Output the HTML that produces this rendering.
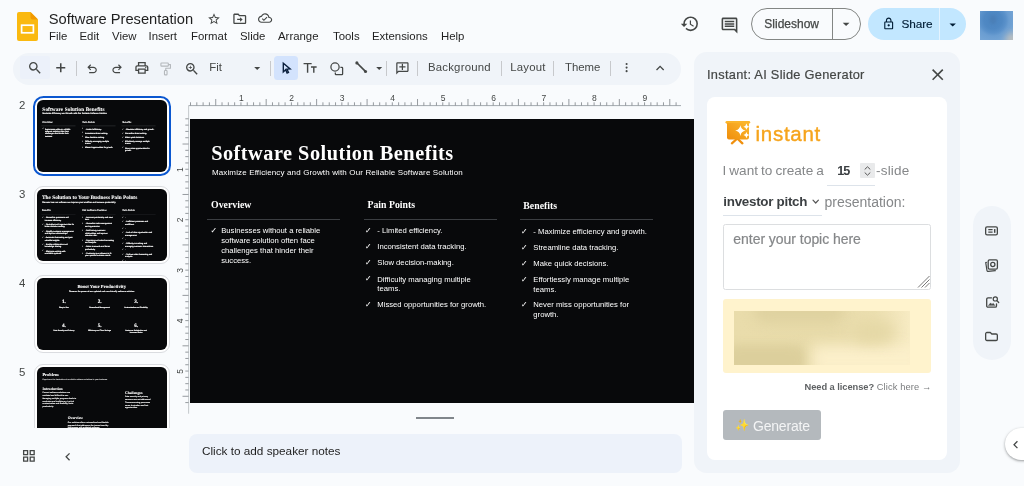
<!DOCTYPE html>
<html lang="en">
<head>
<meta charset="utf-8">
<title>Software Presentation - Google Slides</title>
<style>
*{box-sizing:border-box;margin:0;padding:0}
html,body{width:1024px;height:486px;overflow:hidden;background:#f9fbfd;font-family:"Liberation Sans",sans-serif;color:#1f1f1f}
.abs{position:absolute}
#app{position:relative;width:1024px;height:486px;overflow:hidden;background:#f9fbfd;will-change:transform;opacity:.999}
svg{display:block;overflow:visible}
/* header */
#doctitle{left:48.7px;top:9.7px;font-size:14.7px;line-height:18px;color:#1f1f1f;white-space:nowrap}
#menus{left:49px;top:29px;font-size:11.4px;line-height:14px;color:#1f1f1f;white-space:nowrap}
#menus span{position:absolute;top:0}
/* toolbar */
#toolbar{left:13px;top:52.5px;width:668px;height:32.2px;border-radius:16px;background:#f0f4f9}
.tsep{top:60.5px;width:1px;height:15.5px;background:#c7c9cc}
.tlbl{top:60.2px;font-size:11.4px;line-height:14px;color:#444746;white-space:nowrap}
/* filmstrip */
.num{font-size:11.4px;color:#444746;left:19px;line-height:12px}
.thumb{left:37px;width:129.5px;height:72.5px;background:#08090b;border-radius:6px;overflow:hidden}
.thumbring{left:34px;width:135.5px;height:78.5px;border:1px solid #dadce0;border-radius:9px;background:#fff}
.t{position:absolute;color:#fff;white-space:nowrap}
.serif{font-family:"Liberation Serif",serif;font-weight:bold}

.ck{font-family:"DejaVu Sans",sans-serif;font-size:7.8px;line-height:9.8px;margin-top:-.3px}
.bl{font-size:7.7px;line-height:9.8px;}
.bl5{font-size:7.4px;line-height:10.6px;font-weight:bold}
.hd{font-size:9.8px;line-height:12px}
.dv{width:133px;height:1px;background:#3b3e42}
.ctr{text-align:center}
.sc{position:absolute;left:0;top:0;width:504.5px;height:283.5px;transform:scale(.2567);transform-origin:0 0}
.pt{font-size:13.500px;line-height:16px;color:#858789;white-space:nowrap}
.thumb .t{text-rendering:geometricPrecision}
.thumb .bl,.thumb .sub{-webkit-text-stroke:.6px #fff}
.thumb .bl5{-webkit-text-stroke:.3px #fff}
.thumb .serif{-webkit-text-stroke:.3px #fff}
.thumb .ck{-webkit-text-stroke:.4px #fff}
.thumb .dv{background:#3b3e42;height:1.4px}
</style>
</head>
<body>
<div id="app">

<!-- ===== header ===== -->
<div class="abs" id="logo" style="left:17px;top:12px;width:21px;height:29px">
<svg width="21" height="29" viewBox="0 0 21 29"><path d="M2 0h11.5L21 7.5V27a2 2 0 0 1-2 2H2a2 2 0 0 1-2-2V2a2 2 0 0 1 2-2z" fill="#fbb910"/><path d="M13.5 0L21 7.5h-5.5a2 2 0 0 1-2-2z" fill="#f29900"/><rect x="4.6" y="13.2" width="11.8" height="7.6" fill="none" stroke="#fff" stroke-width="1.7"/></svg>
</div>
<div class="abs" id="doctitle">Software Presentation</div>
<div class="abs" id="menus">
<span style="left:0">File</span><span style="left:30.5px">Edit</span><span style="left:63px">View</span><span style="left:99.5px">Insert</span><span style="left:142px">Format</span><span style="left:191px">Slide</span><span style="left:229px">Arrange</span><span style="left:284px">Tools</span><span style="left:323px">Extensions</span><span style="left:392px">Help</span>
</div>

<svg class="abs" style="left:206.80px;top:11.90px" width="14" height="14" viewBox="0 0 24 24" fill="#444746" ><path d="M22 9.240l-7.190-.620L12 2 9.190 8.630 2 9.240l5.460 4.730L5.820 21 12 17.270 18.180 21l-1.630-7.030L22 9.240zM12 15.400l-3.760 2.270 1-4.280-3.320-2.880 4.380-.380L12 6.100l1.710 4.040 4.380.380-3.320 2.880 1 4.280L12 15.400z"/></svg>
<svg class="abs" style="left:231.70px;top:10.95px" width="15.5" height="15.5" viewBox="0 0 24 24" fill="#444746" ><path d="M20 6h-8l-2-2H4c-1.100 0-2 .900-2 2v12c0 1.100.900 2 2 2h16c1.100 0 2-.900 2-2V8c0-1.100-.900-2-2-2zm0 12H4V6h5.170l2 2H20v10zm-7.500-1.500l4-3.500-4-3.500V12H8v2h4.500v2.500z"/></svg>
<svg class="abs" style="left:257.90px;top:11.40px" width="14.2" height="14.2" viewBox="0 0 24 24" fill="#444746" ><path d="M19.350 10.040C18.670 6.590 15.640 4 12 4 9.110 4 6.600 5.640 5.350 8.040 2.340 8.360 0 10.910 0 14c0 3.310 2.690 6 6 6h13c2.760 0 5-2.240 5-5 0-2.640-2.050-4.780-4.650-4.960zM19 18H6c-2.210 0-4-1.790-4-4 0-2.050 1.530-3.760 3.560-3.970l1.070-.110.500-.950C8.080 7.140 9.940 6 12 6c2.620 0 4.880 1.860 5.390 4.430l.300 1.500 1.530.110c1.560.100 2.780 1.410 2.780 2.960 0 1.650-1.350 3-3 3zm-9-3.820l-2.090-2.090L6.500 13.500 10 17l6.010-6.010-1.410-1.410z"/></svg>
<svg class="abs" style="left:679.70px;top:14.20px" width="19.6" height="19.6" viewBox="0 0 24 24" fill="#444746" ><path d="M13 3a9 9 0 0 0-9 9H1l3.890 3.890.070.140L9 12H6c0-3.870 3.130-7 7-7s7 3.130 7 7-3.130 7-7 7c-1.930 0-3.680-.790-4.940-2.060l-1.420 1.420A8.954 8.954 0 0 0 13 21a9 9 0 0 0 0-18zm-1 5v5l4.250 2.520.770-1.280-3.520-2.090V8H12z"/></svg>
<svg class="abs" style="left:719.55px;top:15.80px" width="19" height="19" viewBox="0 0 24 24" fill="#444746" ><path d="M21.990 4c0-1.100-.890-2-1.990-2H4c-1.100 0-2 .900-2 2v12c0 1.100.900 2 2 2h14l4 4-.010-18zM20 4v13.170L18.830 16H4V4h16zM6 12h12v2H6zm0-3h12v2H6zm0-3h12v2H6z"/></svg>
<div class="abs" style="left:750.8px;top:8.2px;width:110.3px;height:31.7px;border:1px solid #838684;border-radius:16px"></div>
<div class="abs" style="left:831.8px;top:8.7px;width:1px;height:30.7px;background:#838684"></div>
<div class="abs" style="left:764.3px;top:16.7px;font-size:12px;line-height:14px;color:#444746;white-space:nowrap;-webkit-text-stroke:.25px #444746">Slideshow</div>
<svg class="abs" style="left:837.80px;top:15.80px" width="16.2" height="16.2" viewBox="0 0 24 24" fill="#444746" ><path d="M7 10l5 5 5-5z"/></svg>
<div class="abs" style="left:867.5px;top:8.2px;width:98.8px;height:31.7px;border-radius:16px;background:#c2e7ff"></div>
<div class="abs" style="left:938.8px;top:8.2px;width:1px;height:31.7px;background:#e4f3ff"></div>
<svg class="abs" style="left:881.55px;top:16.70px" width="13.4" height="13.4" viewBox="0 0 24 24" fill="#001d35" ><path d="M18 8h-1V6c0-2.760-2.240-5-5-5S7 3.240 7 6v2H6c-1.100 0-2 .900-2 2v10c0 1.100.900 2 2 2h12c1.100 0 2-.900 2-2V10c0-1.100-.900-2-2-2zM9 6c0-1.660 1.340-3 3-3s3 1.340 3 3v2H9V6zm9 14H6V10h12v10zm-6-3c1.100 0 2-.900 2-2s-.900-2-2-2-2 .900-2 2 .900 2 2 2z"/></svg>
<div class="abs" style="left:901.6px;top:16.7px;font-size:11.8px;line-height:14px;color:#001d35;white-space:nowrap;letter-spacing:-.1px;-webkit-text-stroke:.15px #001d35">Share</div>
<svg class="abs" style="left:945.10px;top:16.90px" width="15.4" height="15.4" viewBox="0 0 24 24" fill="#001d35" ><path d="M7 10l5 5 5-5z"/></svg>
<div class="abs" id="avatar" style="left:980.2px;top:10.6px;width:32.8px;height:29.1px;background:radial-gradient(circle at 13px 9px,#4b84c0 0,#4f88c3 9px,#5a91ca 13px,#6a9dd1 16px,#74a4d5 22px);overflow:hidden"><div class="abs" style="left:10px;top:4px;width:6px;height:9px;border-radius:50%;background:#4a7db4;filter:blur(1.500px);opacity:.8"></div><div class="abs" style="right:-9px;bottom:-9px;width:17px;height:17px;border-radius:50%;background:#c2c2be;filter:blur(3px);opacity:.9"></div></div>

<!-- ===== toolbar ===== -->
<div class="abs" id="toolbar"></div>
<div class="abs" style="left:20.2px;top:56.2px;width:29.6px;height:22.4px;border-radius:2px;background:#ecf1fa"></div>
<div class="abs" style="left:274px;top:56px;width:23.5px;height:23.500px;border-radius:3.500px;background:#d3e3fd"></div>
<div class="abs tsep" style="left:76.00px"></div>
<div class="abs tsep" style="left:269.90px"></div>
<div class="abs tsep" style="left:386.10px"></div>
<div class="abs tsep" style="left:416.75px"></div>
<div class="abs tsep" style="left:501.10px"></div>
<div class="abs tsep" style="left:553.10px"></div>
<div class="abs tsep" style="left:610.00px"></div>
<svg class="abs" style="left:26.70px;top:60.30px" width="16" height="16" viewBox="0 0 24 24" fill="#444746" ><path d="M15.5 14h-.79l-.28-.27A6.471 6.471 0 0 0 16 9.5 6.5 6.5 0 1 0 9.5 16c1.61 0 3.09-.59 4.23-1.57l.27.28v.79l5 4.99L20.49 19l-4.99-5zm-6 0C7.01 14 5 11.99 5 9.5S7.01 5 9.5 5 14 7.01 14 9.5 11.99 14 9.5 14z"/></svg>
<svg class="abs" style="left:52.70px;top:59.75px" width="15.5" height="15.5" viewBox="0 0 24 24" fill="#444746" ><path d="M19 13.200h-5.800V19h-2.400v-5.800H5v-2.400h5.800V5h2.400v5.800H19z"/></svg>
<svg class="abs" style="left:84.70px;top:61.95px" width="14.2" height="14.2" viewBox="0 0 24 24" fill="#444746" ><path d="M7 19v-2h7.1q1.575 0 2.738-1T18 13.500 16.838 11 14.100 10H7.800l2.600 2.600L9 14 4 9l5-5 1.400 1.400L7.800 8h6.300q2.425 0 4.163 1.575T20 13.500t-1.737 3.925T14.100 19z"/></svg>
<svg class="abs" style="left:109.60px;top:61.95px" width="14.2" height="14.2" viewBox="0 0 24 24" fill="#444746" ><path d="M9.900 19q-2.425 0-4.163-1.575T4 13.500t1.737-3.925T9.900 8h6.300l-2.600-2.600L15 4l5 5-5 5-1.400-1.400 2.600-2.600H9.900q-1.575 0-2.738 1T6 13.500 7.162 16t2.738 1H17v2z"/></svg>
<svg class="abs" style="left:134.15px;top:60.25px" width="15.7" height="15.7" viewBox="0 0 24 24" fill="#444746" ><path d="M19 8h-1V3H6v5H5c-1.660 0-3 1.340-3 3v6h4v4h12v-4h4v-6c0-1.660-1.340-3-3-3zM8 5h8v3H8V5zm8 12v2H8v-4h8v2zm2-2v-2H6v2H4v-4c0-.550.450-1 1-1h14c.550 0 1 .450 1 1v4h-2z"/><circle cx="18" cy="11.500" r="1"/></svg>
<svg class="abs" style="left:158.45px;top:60.85px" width="15.5" height="15.5" viewBox="0 0 24 24" fill="none" stroke="#b4b8bc" stroke-width="1.700" stroke-linejoin="round"><rect x="4.500" y="3.200" width="11.500" height="4.800" rx="1"/><path d="M16 5.600H19.300V11.200H12V14.500"/><rect x="10" y="14.700" width="4" height="6.800" rx="1"/></svg>
<svg class="abs" style="left:184.00px;top:60.70px" width="16" height="16" viewBox="0 0 24 24" fill="#444746" ><path d="M15.500 14h-.790l-.280-.270A6.471 6.471 0 0 0 16 9.500 6.500 6.500 0 1 0 9.500 16c1.610 0 3.090-.590 4.230-1.570l.270.280v.790l5 4.990L20.490 19l-4.990-5zm-6 0C7.010 14 5 11.990 5 9.500S7.010 5 9.500 5 14 7.010 14 9.500 11.990 14 9.500 14zm.5-7H9v2H7v1h2v2h1v-2h2V9h-2z"/></svg>
<div class="abs tlbl" style="left:209.3px">Fit</div>
<svg class="abs" style="left:250.30px;top:61.10px" width="14.4" height="14.4" viewBox="0 0 24 24" fill="#444746" ><path d="M7 10l5 5 5-5z"/></svg>
<svg class="abs" style="left:280.20px;top:62.20px" width="12.2" height="12.2" viewBox="0 0 24 24" fill="#444746" ><path d="M6.500 2.500v17l4.600-4.300 2.900 6.600 2.700-1.200-2.900-6.500 6.200-.300z" fill="none" stroke="#0a1f3d" stroke-width="2.700" stroke-linejoin="miter"/></svg>
<svg class="abs" style="left:302.10px;top:59.70px" width="16.2" height="16.2" viewBox="0 0 24 24" fill="#444746" ><path d="M2.300 5.400H14.300M8.300 5.400V19M13.300 10.300H21.700M17.500 10.300V19" fill="none" stroke="#444746" stroke-width="2.100"/></svg>
<svg class="abs" style="left:328.70px;top:60.60px" width="15.2" height="15.2" viewBox="0 0 24 24" fill="#444746" ><circle cx="9.500" cy="9.500" r="6.500" fill="none" stroke="#444746" stroke-width="2"/><path d="M18 10h2.500a1 1 0 0 1 1 1v9.500a1 1 0 0 1-1 1H11a1 1 0 0 1-1-1V18" fill="none" stroke="#444746" stroke-width="2"/></svg>
<svg class="abs" style="left:354.40px;top:60.30px" width="14.4" height="14.4" viewBox="0 0 24 24" fill="#444746" ><path d="M5 5l14 14" stroke="#444746" stroke-width="2.900" fill="none"/><circle cx="4.800" cy="4.800" r="2.600"/><circle cx="19.200" cy="19.200" r="2.600"/></svg>
<svg class="abs" style="left:371.90px;top:61.10px" width="14.4" height="14.4" viewBox="0 0 24 24" fill="#444746" ><path d="M7 10l5 5 5-5z"/></svg>
<svg class="abs" style="left:394.70px;top:60.60px" width="14.8" height="14.8" viewBox="0 0 24 24" fill="#444746" ><g transform="translate(24,0) scale(-1,1)"><path d="M22 4c0-1.100-.900-2-2-2H4c-1.100 0-2 .900-2 2v12c0 1.100.900 2 2 2h14l4 4V4zm-2 13.170L18.830 16H4V4h16v13.170z"/></g><path d="M13 5h-2v4H7v2h4v4h2v-4h4V9h-4z" transform="translate(0,-0.500)"/></svg>
<div class="abs tlbl" style="left:428px;letter-spacing:.2px">Background</div>
<div class="abs tlbl" style="left:510.2px;letter-spacing:.22px">Layout</div>
<div class="abs tlbl" style="left:565px;letter-spacing:-.05px">Theme</div>
<svg class="abs" style="left:619.60px;top:61.45px" width="13.2" height="13.2" viewBox="0 0 24 24" fill="#444746" ><circle cx="12" cy="5.500" r="1.900"/><circle cx="12" cy="12" r="1.900"/><circle cx="12" cy="18.500" r="1.900"/></svg>
<svg class="abs" style="left:651.60px;top:60.20px" width="16.2" height="16.2" viewBox="0 0 24 24" fill="#444746" ><path d="M12 8l-6 6 1.410 1.410L12 10.830l4.590 4.580L18 14z"/></svg>

<!-- ===== filmstrip ===== -->
<div class="abs num" style="top:99.2px">2</div>
<div class="abs num" style="top:188.2px">3</div>
<div class="abs num" style="top:277.2px">4</div>
<div class="abs num" style="top:366.1px">5</div>

<div class="abs" style="left:32.8px;top:95.6px;width:137.8px;height:80.6px;border:2px solid #0b57d0;border-radius:10.5px;background:#fff"></div>
<div class="abs thumb" id="th2" style="top:99.8px"><div class="sc">
<div class="t serif" style="left:20.9px;top:22.7px;font-size:20.3px;line-height:24px;letter-spacing:.5px">Software Solution Benefits</div>
<div class="t sub" style="left:21.6px;top:48.9px;font-size:8px;line-height:10px;letter-spacing:.14px">Maximize Efficiency and Growth with Our Reliable Software Solution</div>
<div class="t serif hd" style="left:20.8px;top:80.6px">Overview</div>
<div class="t serif hd" style="left:177.2px;top:80.6px">Pain Points</div>
<div class="t serif hd" style="left:333px;top:81.1px">Benefits</div>
<div class="abs dv" style="left:16.5px;top:100.3px"></div>
<div class="abs dv" style="left:173.3px;top:100.3px"></div>
<div class="abs dv" style="left:329.3px;top:100.3px"></div>
<div class="t ck" style="left:20.3px;top:107.5px">✓</div><div class="t bl" style="left:30.9px;top:107.5px">Businesses without a reliable<br>software solution often face<br>challenges that hinder their<br>success.</div>
<div class="t ck" style="left:174.7px;top:107.7px">✓</div><div class="t bl" style="left:187px;top:107.7px">- Limited efficiency.</div>
<div class="t ck" style="left:174.7px;top:123.6px">✓</div><div class="t bl" style="left:187px;top:123.6px">Inconsistent data tracking.</div>
<div class="t ck" style="left:174.7px;top:139.6px">✓</div><div class="t bl" style="left:187px;top:139.6px">Slow decision-making.</div>
<div class="t ck" style="left:174.7px;top:155.8px">✓</div><div class="t bl" style="left:187px;top:155.8px">Difficulty managing multiple<br>teams.</div>
<div class="t ck" style="left:174.7px;top:181.3px">✓</div><div class="t bl" style="left:187px;top:181.3px">Missed opportunities for growth.</div>
<div class="t ck" style="left:330.7px;top:108.3px">✓</div><div class="t bl" style="left:343px;top:108.3px">- Maximize efficiency and growth.</div>
<div class="t ck" style="left:330.7px;top:124.2px">✓</div><div class="t bl" style="left:343px;top:124.2px">Streamline data tracking.</div>
<div class="t ck" style="left:330.7px;top:140.1px">✓</div><div class="t bl" style="left:343px;top:140.1px">Make quick decisions.</div>
<div class="t ck" style="left:330.7px;top:156.1px">✓</div><div class="t bl" style="left:343px;top:156.1px">Effortlessly manage multiple<br>teams.</div>
<div class="t ck" style="left:330.7px;top:181.5px">✓</div><div class="t bl" style="left:343px;top:181.5px">Never miss opportunities for<br>growth.</div>
</div></div>
<div class="abs thumbring" style="top:185.8px"></div>
<div class="abs thumb" id="th3" style="top:188.8px"><div class="sc">
<div class="t serif" style="left:19.5px;top:20.5px;font-size:20.5px;line-height:24px;letter-spacing:.1px">The Solution to Your Business Pain Points</div>
<div class="t sub" style="left:20px;top:46px;font-size:8px;line-height:10px;letter-spacing:.05px">Discover how our software can improve your workflow and increase productivity.</div>
<div class="t serif hd" style="left:19.5px;top:77px">Benefits</div>
<div class="t serif hd" style="left:175px;top:77px">Our Software Features</div>
<div class="t serif hd" style="left:333px;top:78px">Pain Points</div>
<div class="abs dv" style="left:16.5px;top:100px"></div>
<div class="abs dv" style="left:173.3px;top:100px"></div>
<div class="abs dv" style="left:329.3px;top:100px"></div>
<div class="t ck" style="left:19px;top:107px">✓</div><div class="t bl" style="left:30px;top:107px">- Streamline processes and<br>increase efficiency.</div>
<div class="t ck" style="left:19px;top:132px">✓</div><div class="t bl" style="left:30px;top:132px">- Centralize and organize data for<br>better decision-making.</div>
<div class="t ck" style="left:19px;top:160px">✓</div><div class="t bl" style="left:30px;top:160px">- Simplify customer management<br>and improve relationships.</div>
<div class="t ck" style="left:19px;top:185px">✓</div><div class="t bl" style="left:30px;top:185px">- Automate forecasting and gain<br>valuable insights.</div>
<div class="t ck" style="left:19px;top:210.5px">✓</div><div class="t bl" style="left:30px;top:210.5px">- Enable collaboration and<br>knowledge sharing.</div>
<div class="t ck" style="left:19px;top:236.5px">✓</div><div class="t bl" style="left:30px;top:236.5px">- Eliminate working with<br>unreliable systems.</div>
<div class="t ck" style="left:174.7px;top:105.5px">✓</div><div class="t bl" style="left:187px;top:105.5px">- Increase productivity and save<br>time.</div>
<div class="t ck" style="left:174.7px;top:131px">✓</div><div class="t bl" style="left:187px;top:131px">- Streamline task management<br>and organization.</div>
<div class="t ck" style="left:174.7px;top:158px">✓</div><div class="t bl" style="left:187px;top:158px">- Build strong customer<br>relationships and improve<br>retention rate.</div>
<div class="t ck" style="left:174.7px;top:194px">✓</div><div class="t bl" style="left:187px;top:194px">- Reporting and sales forecasting<br>and analysis.</div>
<div class="t ck" style="left:174.7px;top:219.5px">✓</div><div class="t bl" style="left:187px;top:219.5px">- Better teamwork and boost<br>productivity.</div>
<div class="t ck" style="left:174.7px;top:245.5px">✓</div><div class="t bl" style="left:187px;top:245.5px">- Customize our software to fit<br>your specific business needs.</div>
<div class="t ck" style="left:331px;top:105.5px">✓</div><div class="t bl" style="left:343px;top:105.5px">-</div>
<div class="t ck" style="left:331px;top:123px">✓</div><div class="t bl" style="left:343px;top:123px">- Inefficient processes and<br>workflows.</div>
<div class="t ck" style="left:331px;top:147.5px">✓</div><div class="t bl" style="left:343px;top:147.5px">-</div>
<div class="t ck" style="left:331px;top:165px">✓</div><div class="t bl" style="left:343px;top:165px">- Lack of data organization and<br>management.</div>
<div class="t ck" style="left:331px;top:189.5px">✓</div><div class="t bl" style="left:343px;top:189.5px">-</div>
<div class="t ck" style="left:331px;top:207px">✓</div><div class="t bl" style="left:343px;top:207px">- Difficulty in tracking and<br>managing customer interactions.</div>
<div class="t ck" style="left:331px;top:231.5px">✓</div><div class="t bl" style="left:343px;top:231.5px">-</div>
<div class="t ck" style="left:331px;top:249px">✓</div><div class="t bl" style="left:343px;top:249px">- Tedious sales forecasting and<br>analysis.</div>
<div class="t ck" style="left:331px;top:273.5px">✓</div><div class="t bl" style="left:343px;top:273.5px">-</div>
</div></div>
<div class="abs thumbring" style="top:274.8px"></div>
<div class="abs thumb" id="th4" style="top:277.8px"><div class="sc">
<div class="t serif ctr" style="left:0;width:504.5px;top:21px;font-size:18px;line-height:22px;letter-spacing:.2px">Boost Your Productivity</div>
<div class="t ctr" style="left:0;width:504.5px;top:46.8px;font-size:7.6px;line-height:10px;font-weight:bold;-webkit-text-stroke:.4px #fff">Discover the power of our updated and user-friendly software solution.</div>
<div class="t serif ctr" style="left:25px;width:160px;top:82px;font-size:20px;line-height:22px;-webkit-text-stroke:.5px #fff">1.</div>
<div class="t ctr" style="left:25px;width:160px;top:108.5px;font-size:6.6px;line-height:10.5px;font-weight:bold;-webkit-text-stroke:.5px #fff">Easy to Use</div>
<div class="t serif ctr" style="left:163.7px;width:160px;top:82px;font-size:20px;line-height:22px;-webkit-text-stroke:.5px #fff">2.</div>
<div class="t ctr" style="left:163.7px;width:160px;top:108.5px;font-size:6.6px;line-height:10.5px;font-weight:bold;-webkit-text-stroke:.5px #fff">Streamlined Management</div>
<div class="t serif ctr" style="left:306px;width:160px;top:82px;font-size:20px;line-height:22px;-webkit-text-stroke:.5px #fff">3.</div>
<div class="t ctr" style="left:306px;width:160px;top:108.5px;font-size:6.6px;line-height:10.5px;font-weight:bold;-webkit-text-stroke:.5px #fff">Customization and Flexibility</div>
<div class="t serif ctr" style="left:25px;width:160px;top:171.5px;font-size:20px;line-height:22px;-webkit-text-stroke:.5px #fff">4.</div>
<div class="t ctr" style="left:25px;width:160px;top:199px;font-size:6.6px;line-height:10.5px;font-weight:bold;-webkit-text-stroke:.5px #fff">Data Security and Privacy</div>
<div class="t serif ctr" style="left:163.7px;width:160px;top:171.5px;font-size:20px;line-height:22px;-webkit-text-stroke:.5px #fff">5.</div>
<div class="t ctr" style="left:163.7px;width:160px;top:199px;font-size:6.6px;line-height:10.5px;font-weight:bold;-webkit-text-stroke:.5px #fff">Efficiency and Time Savings</div>
<div class="t serif ctr" style="left:306px;width:160px;top:171.5px;font-size:20px;line-height:22px;-webkit-text-stroke:.5px #fff">6.</div>
<div class="t ctr" style="left:306px;width:160px;top:199px;font-size:6.6px;line-height:10.5px;font-weight:bold;-webkit-text-stroke:.5px #fff">Customer Satisfaction and<br>Increased Sales</div>
</div></div>
<div class="abs" style="left:0;top:360px;width:180px;height:68px;overflow:hidden">
<div class="abs thumbring" style="top:3.8px"></div>
<div class="abs thumb" id="th5" style="top:6.8px"><div class="sc">
<div class="t serif" style="left:21px;top:21px;font-size:17px;line-height:22px;letter-spacing:.2px">Problem</div>
<div class="t" style="left:21.5px;top:44.5px;font-size:7px;line-height:10px;font-weight:bold">Experience the frustration of unreliable software solutions in your business.</div>
<div class="t serif" style="left:21.3px;top:75.5px;font-size:14.5px;line-height:18px">Introduction</div>
<div class="t bl5" style="left:21.5px;top:96px">Current software solutions are<br>outdated and difficult to use.<br>Managing multiple programs leads to<br>confusion and inefficiency. Lack of<br>customization and flexibility limits<br>productivity.</div>
<div class="t serif" style="left:342.7px;top:90.5px;font-size:14.5px;line-height:18px">Challenges</div>
<div class="t bl5" style="left:343px;top:111px">Data security and privacy<br>concerns are not addressed.<br>Time-consuming processes<br>cause frustration and lost<br>opportunities.</div>
<div class="t serif" style="left:119.6px;top:191px;font-size:14.5px;line-height:18px">Overview</div>
<div class="t bl5" style="left:120px;top:210px">Our solution offers a streamlined and flexible<br>approach that addresses the issues faced by<br>businesses with outdated software.</div>
</div></div>
</div>

<!-- ===== rulers ===== -->
<svg class="abs" id="rulers" style="left:0;top:0" width="1024" height="486" viewBox="0 0 1024 486">
<g stroke="#8a8f94" stroke-width=".9" fill="none">
<path d="M188.6 105.6H681" stroke="#9aa0a6"/>
<path d="M188.6 105.6V413.7" stroke="#c0c3c6"/>
<path d="M190.50 102.3V105.6M196.81 102.3V105.6M203.11 102.3V105.6M209.42 102.3V105.6M215.72 99V105.6M222.03 102.3V105.6M228.34 102.3V105.6M234.64 102.3V105.6M240.95 102.3V105.6M247.26 102.3V105.6M253.56 102.3V105.6M259.87 102.3V105.6M266.18 99V105.6M272.48 102.3V105.6M278.79 102.3V105.6M285.09 102.3V105.6M291.40 102.3V105.6M297.71 102.3V105.6M304.01 102.3V105.6M310.32 102.3V105.6M316.62 99V105.6M322.93 102.3V105.6M329.24 102.3V105.6M335.54 102.3V105.6M341.85 102.3V105.6M348.16 102.3V105.6M354.46 102.3V105.6M360.77 102.3V105.6M367.08 99V105.6M373.38 102.3V105.6M379.69 102.3V105.6M385.99 102.3V105.6M392.30 102.3V105.6M398.61 102.3V105.6M404.91 102.3V105.6M411.22 102.3V105.6M417.52 99V105.6M423.83 102.3V105.6M430.14 102.3V105.6M436.44 102.3V105.6M442.75 102.3V105.6M449.06 102.3V105.6M455.36 102.3V105.6M461.67 102.3V105.6M467.98 99V105.6M474.28 102.3V105.6M480.59 102.3V105.6M486.89 102.3V105.6M493.20 102.3V105.6M499.51 102.3V105.6M505.81 102.3V105.6M512.12 102.3V105.6M518.42 99V105.6M524.73 102.3V105.6M531.04 102.3V105.6M537.34 102.3V105.6M543.65 102.3V105.6M549.96 102.3V105.6M556.26 102.3V105.6M562.57 102.3V105.6M568.88 99V105.6M575.18 102.3V105.6M581.49 102.3V105.6M587.79 102.3V105.6M594.10 102.3V105.6M600.41 102.3V105.6M606.71 102.3V105.6M613.02 102.3V105.6M619.33 99V105.6M625.63 102.3V105.6M631.94 102.3V105.6M638.24 102.3V105.6M644.55 102.3V105.6M650.86 102.3V105.6M657.16 102.3V105.6M663.47 102.3V105.6M669.78 99V105.6M676.08 102.3V105.6"/>
<path d="M185.3 118.80H188.6M185.3 125.11H188.6M185.3 131.41H188.6M185.3 137.72H188.6M182.5 144.03H188.6M185.3 150.33H188.6M185.3 156.64H188.6M185.3 162.94H188.6M185.3 169.25H188.6M185.3 175.56H188.6M185.3 181.86H188.6M185.3 188.17H188.6M182.5 194.48H188.6M185.3 200.78H188.6M185.3 207.09H188.6M185.3 213.39H188.6M185.3 219.70H188.6M185.3 226.01H188.6M185.3 232.31H188.6M185.3 238.62H188.6M182.5 244.93H188.6M185.3 251.23H188.6M185.3 257.54H188.6M185.3 263.84H188.6M185.3 270.15H188.6M185.3 276.46H188.6M185.3 282.76H188.6M185.3 289.07H188.6M182.5 295.38H188.6M185.3 301.68H188.6M185.3 307.99H188.6M185.3 314.29H188.6M185.3 320.60H188.6M185.3 326.91H188.6M185.3 333.21H188.6M185.3 339.52H188.6M182.5 345.82H188.6M185.3 352.13H188.6M185.3 358.44H188.6M185.3 364.74H188.6M185.3 371.05H188.6M185.3 377.36H188.6M185.3 383.66H188.6M185.3 389.97H188.6M182.5 396.28H188.6M185.3 402.58H188.6"/>
</g>
<g font-family="Liberation Sans, sans-serif" font-size="8.500" fill="#444746" text-anchor="middle">
<text x="241.25" y="100.6">1</text><text x="291.70" y="100.6">2</text><text x="342.15" y="100.6">3</text><text x="392.60" y="100.6">4</text><text x="443.05" y="100.6">5</text><text x="493.50" y="100.6">6</text><text x="543.95" y="100.6">7</text><text x="594.40" y="100.6">8</text><text x="644.85" y="100.6">9</text>
<text transform="translate(183.1 169.55) rotate(-90)">1</text><text transform="translate(183.1 220.00) rotate(-90)">2</text><text transform="translate(183.1 270.45) rotate(-90)">3</text><text transform="translate(183.1 320.90) rotate(-90)">4</text><text transform="translate(183.1 371.35) rotate(-90)">5</text>
</g></svg>
<!-- ===== main slide ===== -->
<div class="abs" id="slide" style="left:190.3px;top:118.8px;width:504px;height:283.8px;background:#08090b;overflow:hidden">
<div class="t serif" style="left:20.9px;top:22.7px;font-size:20.3px;line-height:24px;letter-spacing:.5px">Software Solution Benefits</div>
<div class="t sub" style="left:21.6px;top:48.9px;font-size:8px;line-height:10px;letter-spacing:.14px">Maximize Efficiency and Growth with Our Reliable Software Solution</div>
<div class="t serif hd" style="left:20.8px;top:80.6px">Overview</div>
<div class="t serif hd" style="left:177.2px;top:80.6px">Pain Points</div>
<div class="t serif hd" style="left:333px;top:81.1px">Benefits</div>
<div class="abs dv" style="left:16.5px;top:100.3px"></div>
<div class="abs dv" style="left:173.3px;top:100.3px"></div>
<div class="abs dv" style="left:329.3px;top:100.3px"></div>
<div class="t ck" style="left:20.3px;top:107.5px">✓</div><div class="t bl" style="left:30.9px;top:107.5px">Businesses without a reliable<br>software solution often face<br>challenges that hinder their<br>success.</div>
<div class="t ck" style="left:174.7px;top:107.7px">✓</div><div class="t bl" style="left:187px;top:107.7px">- Limited efficiency.</div>
<div class="t ck" style="left:174.7px;top:123.6px">✓</div><div class="t bl" style="left:187px;top:123.6px">Inconsistent data tracking.</div>
<div class="t ck" style="left:174.7px;top:139.6px">✓</div><div class="t bl" style="left:187px;top:139.6px">Slow decision-making.</div>
<div class="t ck" style="left:174.7px;top:155.8px">✓</div><div class="t bl" style="left:187px;top:155.8px">Difficulty managing multiple<br>teams.</div>
<div class="t ck" style="left:174.7px;top:181.3px">✓</div><div class="t bl" style="left:187px;top:181.3px">Missed opportunities for growth.</div>
<div class="t ck" style="left:330.7px;top:108.3px">✓</div><div class="t bl" style="left:343px;top:108.3px">- Maximize efficiency and growth.</div>
<div class="t ck" style="left:330.7px;top:124.2px">✓</div><div class="t bl" style="left:343px;top:124.2px">Streamline data tracking.</div>
<div class="t ck" style="left:330.7px;top:140.1px">✓</div><div class="t bl" style="left:343px;top:140.1px">Make quick decisions.</div>
<div class="t ck" style="left:330.7px;top:156.1px">✓</div><div class="t bl" style="left:343px;top:156.1px">Effortlessly manage multiple<br>teams.</div>
<div class="t ck" style="left:330.7px;top:181.5px">✓</div><div class="t bl" style="left:343px;top:181.5px">Never miss opportunities for<br>growth.</div>
</div>

<!-- ===== speaker notes ===== -->
<div class="abs" style="left:416px;top:417px;width:38px;height:2px;background:#80868b"></div>
<div class="abs" id="notes" style="left:189px;top:434px;width:493px;height:38.5px;border-radius:8px;background:#edf2fa"></div>
<div class="abs" style="left:202px;top:443px;font-size:11.75px;line-height:16px;color:#1f1f1f;white-space:nowrap">Click to add speaker notes</div>

<!-- ===== side panel ===== -->
<div class="abs" id="panel" style="left:694.4px;top:52.1px;width:265.4px;height:420.9px;border-radius:12.5px;background:#f0f4f9"></div>
<div class="abs" id="card" style="left:707px;top:96.9px;width:239.9px;height:363.2px;border-radius:8px;background:#fff"></div>

<div class="abs" style="left:707px;top:66.6px;font-size:12.8px;line-height:16px;color:#444746;white-space:nowrap;letter-spacing:.28px;-webkit-text-stroke:.2px #444746">Instant: AI Slide Generator</div>
<svg class="abs" style="left:928.05px;top:64.95px" width="19.4" height="19.4" viewBox="0 0 24 24" fill="#444746" ><path d="M19 6.410L17.590 5 12 10.590 6.410 5 5 6.410 10.590 12 5 17.590 6.410 19 12 13.410 17.590 19 19 17.590 13.410 12z"/></svg>
<!-- panel content -->
<svg class="abs" style="left:724px;top:119px" width="28" height="27" viewBox="724 119 28 27">
<defs><linearGradient id="og" x1="1" y1="0" x2="0" y2="1"><stop offset="0" stop-color="#fcb930"/><stop offset="1" stop-color="#ef8d0b"/></linearGradient></defs>
<path d="M731.9 143.300L737.300 138.500L742.400 143.300" fill="none" stroke="#f0900d" stroke-width="2.300" stroke-linecap="round" stroke-linejoin="round"/>
<rect x="725.500" y="120.900" width="24.700" height="2.800" rx="1.400" fill="#fbb52c"/>
<path d="M727 123h22v14.600a2 2 0 0 1-2 2h-18a2 2 0 0 1-2-2z" fill="url(#og)"/>
<path d="M740.400 125.300q.700 4.500 5.200 5.300q-4.500.800-5.200 5.300q-.700-4.500-5.200-5.300q4.500-.800 5.200-5.300z" fill="#fff"/>
<path d="M746.400 123.600q.400 2.600 3 3.100q-2.600.500-3 3.100q-.400-2.600-3-3.100q2.600-.500 3-3.100z" fill="#fff"/>
<path d="M746.400 132q.400 2.600 3 3.100q-2.600.500-3 3.100q-.400-2.600-3-3.100q2.600-.500 3-3.100z" fill="#fff"/>
</svg>
<div class="abs" style="left:755.6px;top:121.500px;font-size:20.500px;line-height:24px;letter-spacing:.72px;color:#f6a41c;-webkit-text-stroke:.4px #f6a41c;white-space:nowrap">instant</div>
<div class="abs pt" style="left:722.500px;top:163px;font-size:13.600px;word-spacing:-.75px">I want to create a</div>
<div class="abs" style="left:837.200px;top:163.400px;font-size:12.600px;line-height:16px;font-weight:bold;color:#3c4043;letter-spacing:-.9px;white-space:nowrap">15</div>
<div class="abs" style="left:860px;top:163px;width:14.800px;height:14.800px;background:#e9eaeb;border-radius:1px"></div>
<svg class="abs" style="left:864px;top:164.500px" width="7" height="12" viewBox="0 0 7 12" fill="none" stroke="#555" stroke-width="1" stroke-linecap="round" stroke-linejoin="round"><path d="M1 4.200L3.500 1.800L6 4.200M1 7.800L3.500 10.200L6 7.800"/></svg>
<div class="abs" style="left:826.800px;top:185px;width:48px;height:1px;background:#dde3ea"></div>
<div class="abs pt" style="left:876px;top:163px;letter-spacing:.2px">-slide</div>
<div class="abs" style="left:723.300px;top:193.500px;font-size:13.400px;line-height:16px;font-weight:bold;color:#3c4043;letter-spacing:-.28px;white-space:nowrap">investor pitch</div>
<svg class="abs" style="left:811.500px;top:198.500px" width="8" height="6" viewBox="0 0 8 6" fill="none" stroke="#555" stroke-width="1.200" stroke-linecap="round" stroke-linejoin="round"><path d="M1 1.200L3.700 4L6.400 1.200"/></svg>
<div class="abs" style="left:723.400px;top:215px;width:98.500px;height:1px;background:#dde3ea"></div>
<div class="abs pt" style="left:824.500px;top:193.500px;font-size:14px">presentation:</div>
<div class="abs" style="left:723.100px;top:224.300px;width:208.100px;height:65.500px;border:1px solid #dcdee0;border-radius:2.500px;background:#fff"></div>
<div class="abs" style="left:733.300px;top:231.300px;font-size:14px;line-height:16px;color:#858789;letter-spacing:-.04px;white-space:nowrap;-webkit-text-stroke:.2px #858789">enter your topic here</div>
<svg class="abs" style="left:918px;top:276px" width="12" height="12" viewBox="0 0 12 12" stroke="#555" stroke-width=".8" fill="none"><path d="M0 11.500L11.500 0M3.500 11.500L11.500 3.500M7 11.500L11.500 7"/></svg>
<div class="abs" style="left:723.100px;top:299.300px;width:208.100px;height:73.500px;border-radius:3px;background:#fff3cd"></div>
<div class="abs" id="blurbox" style="left:734.400px;top:310.600px;width:175.200px;height:54.200px;overflow:hidden;background:linear-gradient(90deg,#e9dcab 0,#e8dbaa 55%,#ecdfb0 80%,#f7ebc3 100%)">
<div class="abs" style="left:-10px;top:34px;width:82px;height:30px;border-radius:12px;background:#dccf9c;filter:blur(5px)"></div>
<div class="abs" style="left:20px;top:-12px;width:90px;height:24px;border-radius:12px;background:#dfd2a0;filter:blur(6px)"></div>
<div class="abs" style="left:78px;top:34px;width:110px;height:30px;background:#fbefca;filter:blur(7px)"></div>
<div class="abs" style="left:120px;top:10px;width:40px;height:22px;border-radius:10px;background:#e5d8a6;filter:blur(7px)"></div>
</div>
<div class="abs" style="left:760px;top:380.900px;width:171.400px;text-align:right;font-size:9.300px;line-height:12px;color:#7a7c7e;white-space:nowrap;letter-spacing:.12px"><b style="color:#5f6264;letter-spacing:-.05px">Need a license?</b> Click here →</div>
<div class="abs" style="left:723px;top:410px;width:98px;height:30px;border-radius:3px;background:#b4b9bd"></div>
<div class="abs" style="left:734.500px;top:418.300px;font-size:11.500px;line-height:14px;color:#f5e6b3;white-space:nowrap;font-family:'DejaVu Sans',sans-serif">✨</div>
<div class="abs" style="left:753px;top:417.700px;font-size:14px;line-height:16px;color:#f3f4f5;white-space:nowrap;letter-spacing:-.2px">Generate</div>
<!-- ===== right rail ===== -->
<div class="abs" id="rail" style="left:972.5px;top:205.5px;width:38.5px;height:154.5px;border-radius:19.25px;background:#f0f4f9"></div>

<svg class="abs" style="left:20.95px;top:448.25px" width="15.8" height="15.8" viewBox="0 0 24 24" fill="#444746" ><path d="M3 3v8h8V3H3zm6 6H5V5h4v4zm-6 4v8h8v-8H3zm6 6H5v-4h4v4zm4-16v8h8V3h-8zm6 6h-4V5h4v4zm-6 4v8h8v-8h-8zm6 6h-4v-4h4v4z"/></svg>
<svg class="abs" style="left:59.60px;top:448.90px" width="15.6" height="15.6" viewBox="0 0 24 24" fill="#444746" ><path d="M15.410 7.410L14 6l-6 6 6 6 1.410-1.410L10.830 12z"/></svg>
<div class="abs" style="left:1004.5px;top:428.3px;width:40px;height:32px;border-radius:16px;background:#fff;box-shadow:0 1px 3px rgba(60,64,67,.35),0 1px 2px rgba(60,64,67,.2)"></div>
<svg class="abs" style="left:1007.90px;top:436.50px" width="15.4" height="15.4" viewBox="0 0 24 24" fill="#444746" ><path d="M15.410 7.410L14 6l-6 6 6 6 1.410-1.410L10.830 12z"/></svg>
<svg class="abs" style="left:980px;top:220px" width="24" height="130" viewBox="980 220 24 130" fill="none" stroke="#444746" stroke-width="1.300" stroke-linejoin="round" stroke-linecap="round">
<rect x="985.650" y="226.900" width="11.700" height="8" rx="1.400"/>
<path d="M988.300 229.700H992.600M988.300 232.200H992.600" stroke-width="1.200" stroke-linecap="butt"/><path d="M994.700 229.100V232.800" stroke-width="1.500" stroke-linecap="butt"/>
<rect x="988.200" y="259.900" width="9.200" height="9.200" rx="1.300"/>
<circle cx="992.800" cy="264.500" r="2.100"/>
<path d="M986.400 262.300L985.700 262.500L987 270.600A1 1 0 0 0 988.200 271.400L995.300 270.700" stroke-width="1.200"/>
<path d="M991.500 297.800H988A1.300 1.300 0 0 0 986.700 299.100V305.900A1.300 1.300 0 0 0 988 307.200H995.200A1.300 1.300 0 0 0 996.500 305.900V303.800"/>
<circle cx="995.300" cy="298.900" r="2.100" stroke-width="1.200"/><path d="M996.900 300.600L998.700 302.500" stroke-width="1.300"/>
<path d="M988.600 305.300L990.600 302.900L992 304.400L993.200 303.300L994.700 305.300Z" fill="#444746" stroke-width=".5"/>
<path d="M985.650 333.800A1.300 1.300 0 0 1 986.950 332.500H990.300L991.800 334H996.050A1.300 1.300 0 0 1 997.350 335.300V339.200A1.300 1.300 0 0 1 996.050 340.500H986.950A1.300 1.300 0 0 1 985.650 339.200Z"/>
</svg>
</div>
</body>
</html>
